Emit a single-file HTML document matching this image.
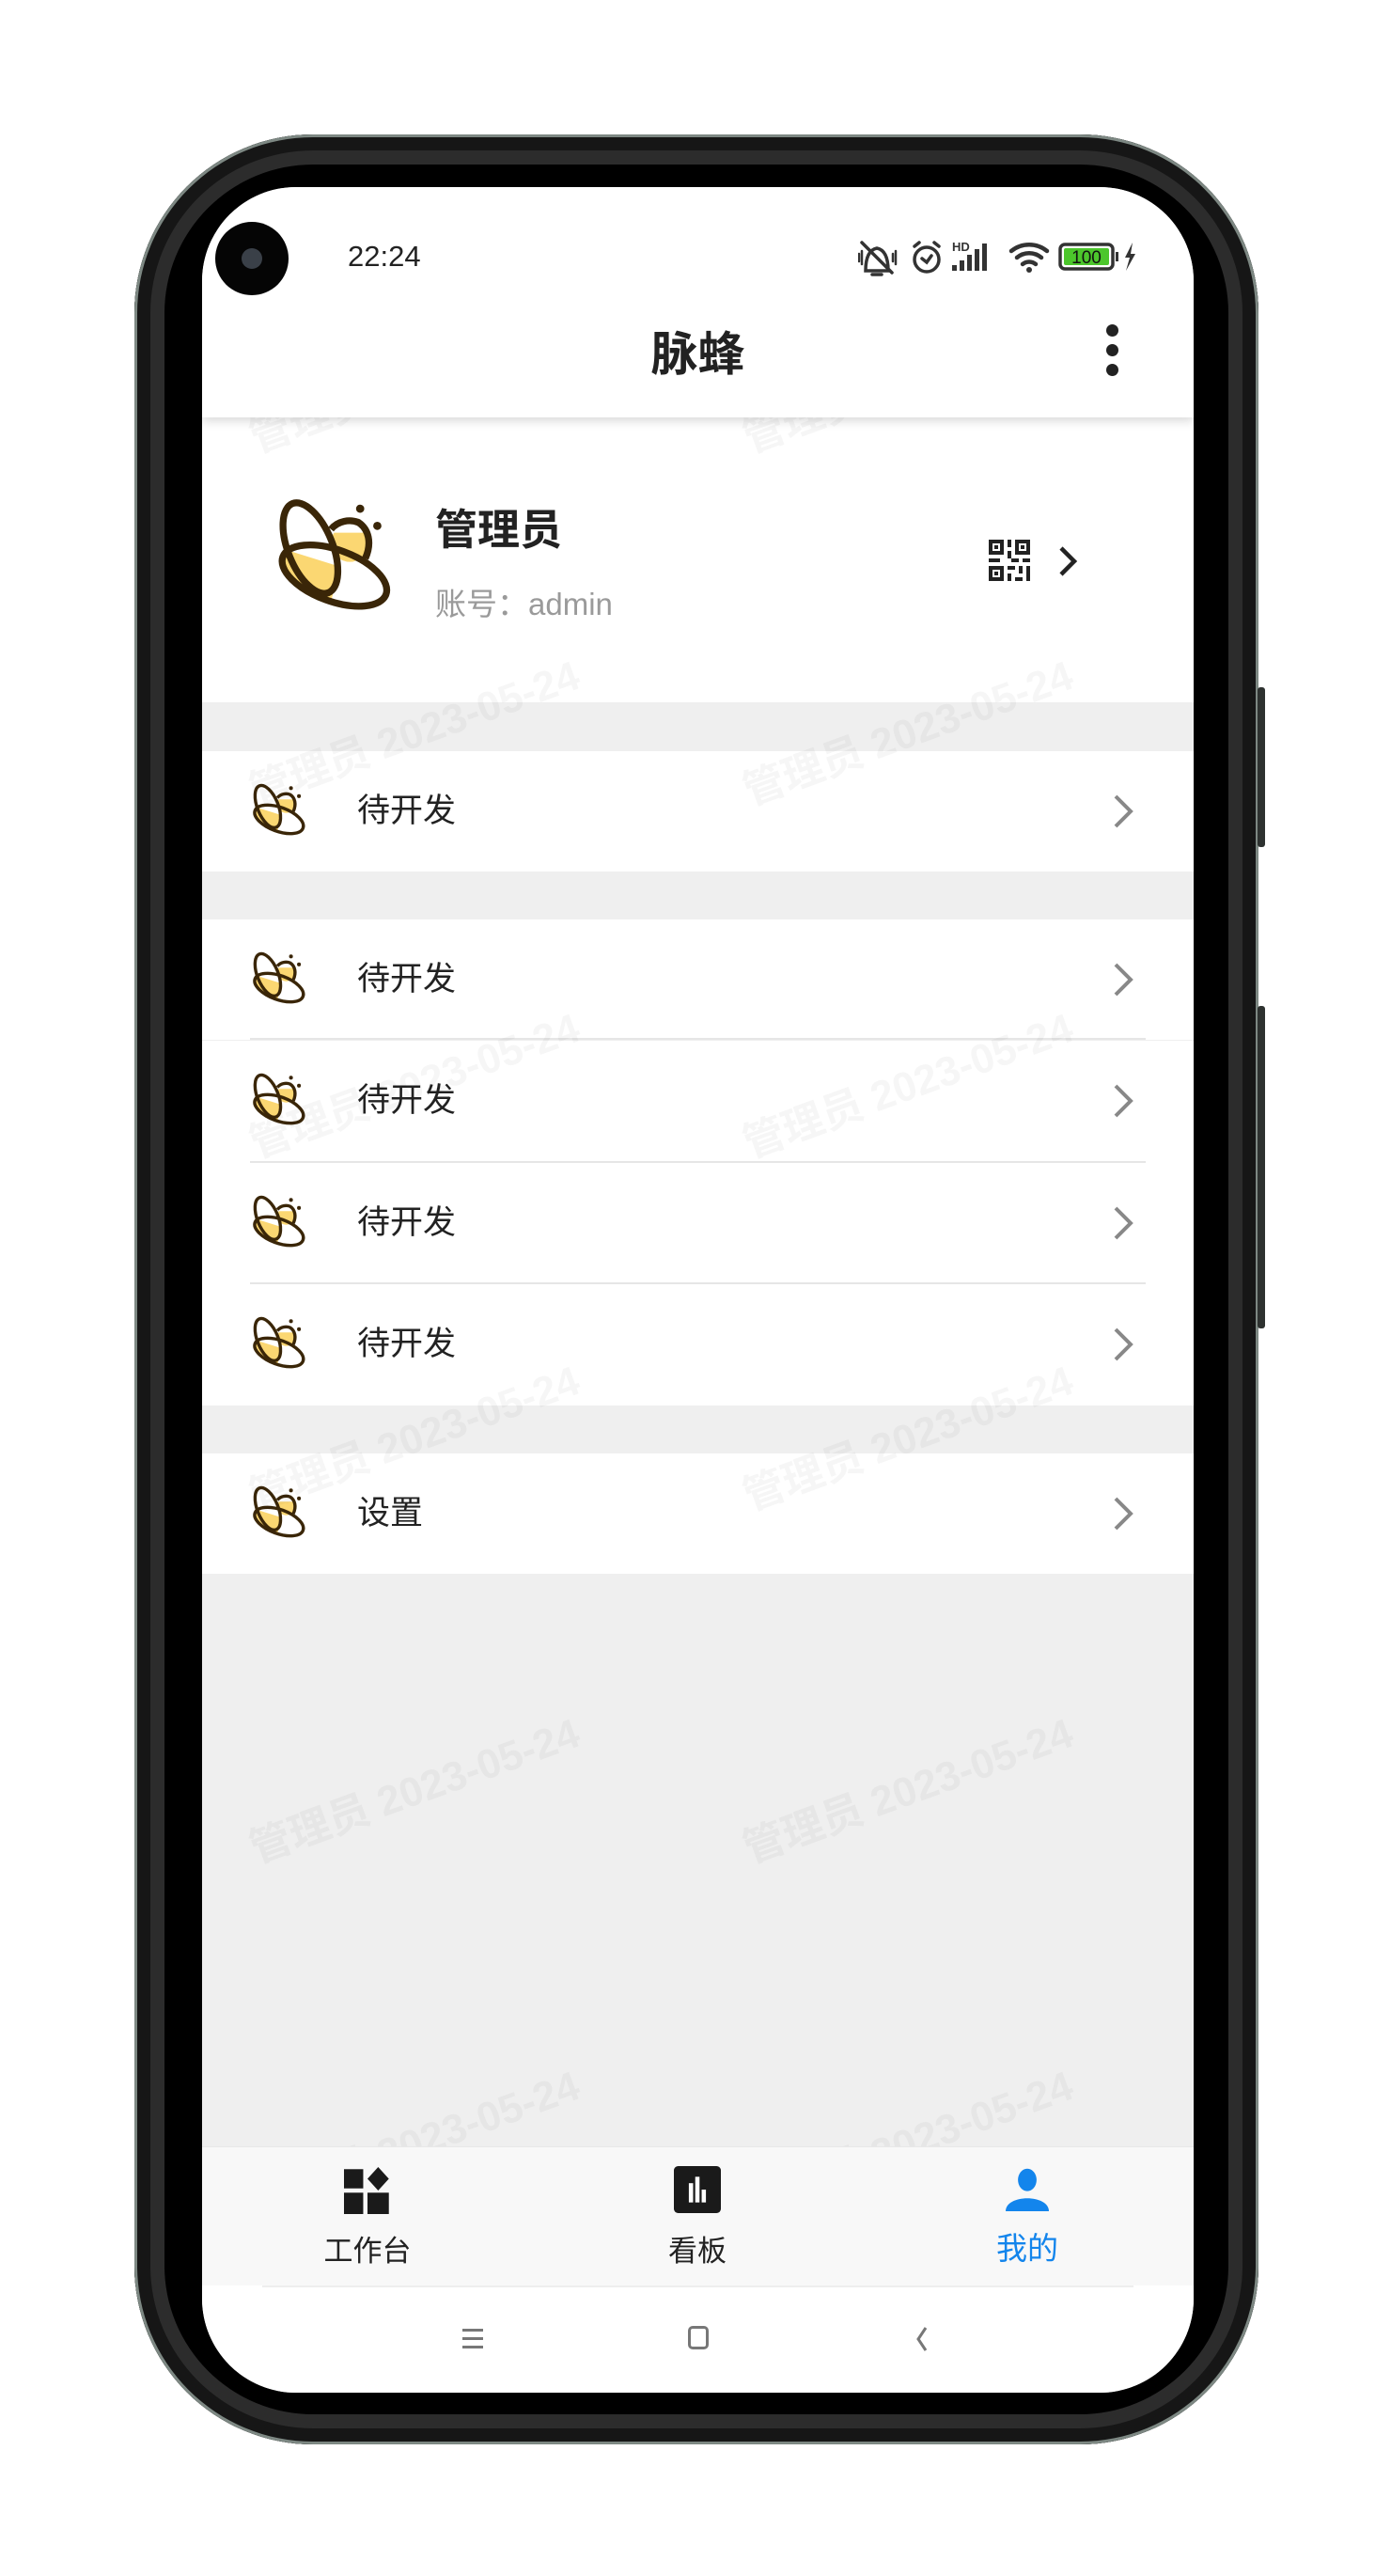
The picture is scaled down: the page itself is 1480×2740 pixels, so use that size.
<!DOCTYPE html>
<html><head><meta charset="utf-8"><style>
*{margin:0;padding:0;box-sizing:border-box}
body{width:1480px;height:2740px;background:#fff;position:relative;overflow:hidden;font-family:"Liberation Sans","Noto Sans CJK SC",sans-serif}
.phone{position:absolute;left:143px;top:143px;width:1196px;height:2457px;border-radius:190px;background:#000;box-shadow:inset 0 0 0 3px #7d8883,inset 0 0 0 17px #161616,inset 0 0 0 32px #2c2c2c}
.btn{position:absolute;left:1338px;width:8px;background:#2e3230;border-radius:3px}
.screen{position:absolute;left:215px;top:199px;width:1055px;height:2346px;border-radius:100px;background:#efefef;overflow:hidden}
.abs{position:absolute}
.row{position:absolute;left:0;width:1055px;height:128px;background:#fff}
.row .ic{position:absolute;left:47px;top:30px;width:68px;height:68px}
.row .t{position:absolute;left:165px;top:42px;font-size:35px;color:#222;line-height:44px}
.row .ch{position:absolute;left:968px;top:44px}
.sep{position:absolute;left:51px;right:51px;bottom:0;height:2px;background:#e6e6e6}
.wm{position:absolute;color:rgba(0,0,0,0.035);font-size:44px;font-weight:bold;transform:rotate(-20deg);white-space:nowrap}
</style></head><body>
<svg width="0" height="0" style="position:absolute">
<defs>
<clipPath id="cb"><path d="M0 46 L42 44 L46 80 L0 80Z"/></clipPath>
<clipPath id="cc"><rect x="30" y="25" width="40" height="30"/></clipPath>
<g id="bee">
<circle cx="50" cy="31" r="11" fill="#fbd772" clip-path="url(#cc)"/>
<ellipse cx="41" cy="50" rx="32" ry="15" transform="rotate(20 41 50)" fill="#fbd772" clip-path="url(#cb)"/>
<path d="M39 23 C43 18 50 17 55 19 C61 23 63 31 59 40" fill="none" stroke="#3a2608" stroke-width="4"/>
<ellipse cx="27" cy="34" rx="13" ry="28" transform="rotate(-22 27 34)" fill="none" stroke="#3a2608" stroke-width="4"/>
<ellipse cx="41" cy="50" rx="32" ry="15" transform="rotate(20 41 50)" fill="none" stroke="#3a2608" stroke-width="4"/>
<circle cx="56" cy="11" r="2.4" fill="#3a2608"/><circle cx="66" cy="21" r="2.4" fill="#3a2608"/>
</g>
<g id="chev"><path d="M4 4 L20 20 L4 36" fill="none" stroke="#888" stroke-width="4"/></g>
</defs></svg>
<div class="phone"></div>
<div class="btn" style="top:731px;height:170px"></div>
<div class="btn" style="top:1070px;height:343px"></div>
<div class="screen">
 <div class="abs" style="left:0;top:0;width:1055px;height:245px;background:#fff;box-shadow:0 4px 10px rgba(0,0,0,0.15);z-index:2"></div>
 <div class="abs" style="left:14px;top:37px;width:78px;height:78px;border-radius:50%;background:#050505;z-index:3"><div style="position:absolute;left:28px;top:28px;width:22px;height:22px;border-radius:50%;background:#3a4048"></div></div>
 <div class="abs" style="left:155px;top:56px;font-size:31px;color:#222;z-index:3">22:24</div>
 <svg class="abs" style="left:698px;top:55px;z-index:3" width="310" height="40" viewBox="0 0 310 40">
  <g fill="none" stroke="#333" stroke-width="3.5" stroke-linecap="round">
   <path d="M8 34 C8 24 10 12 20 10 C30 12 32 24 32 34 Z"/><path d="M15 38 h10"/><path d="M4 4 L36 36" />
   <path d="M1 16 v8 M37 16 v8 M4 13 v14 M40 13 v14" stroke-width="2.5"/>
   <circle cx="73" cy="22" r="13"/><path d="M68 21 l5 4 l5 -7"/><path d="M60 8 l5 -4 M86 8 l-5 -4"/>
  </g>
  <text x="100" y="13" font-size="13" font-weight="bold" fill="#333" font-family="Liberation Sans">HD</text>
  <g fill="#333"><rect x="100" y="28" width="5" height="6"/><rect x="108" y="23" width="5" height="11"/><rect x="116" y="17" width="5" height="17"/><rect x="124" y="11" width="5" height="23"/><rect x="132" y="5" width="5" height="29"/></g>
  <g fill="none" stroke="#333" stroke-width="4.5" stroke-linecap="round"><path d="M163 13 A30 30 0 0 1 201 13"/><path d="M169 20 A20 20 0 0 1 195 20"/><path d="M175 27 A11 11 0 0 1 189 27"/></g>
  <circle cx="182" cy="33" r="3" fill="#333"/>
  <rect x="215" y="6" width="56" height="26" rx="5" fill="none" stroke="#333" stroke-width="3.5"/>
  <rect x="219" y="10" width="48" height="18" rx="2" fill="#4cc62c"/>
  <text x="243" y="26" font-size="19" text-anchor="middle" fill="#111" font-family="Liberation Sans">100</text>
  <rect x="274" y="14" width="3" height="10" fill="#333"/>
  <path d="M292 4 L284 20 L289 20 L285 34 L295 16 L290 16 Z" fill="#333"/>
 </svg>
 <div class="abs" style="left:0;width:1055px;top:138px;text-align:center;font-size:50px;font-weight:bold;color:#222;z-index:3">脉蜂</div>
 <div class="abs" style="left:962px;top:146px;z-index:3"><div style="width:13px;height:13px;border-radius:50%;background:#222;margin-bottom:8px"></div><div style="width:13px;height:13px;border-radius:50%;background:#222;margin-bottom:8px"></div><div style="width:13px;height:13px;border-radius:50%;background:#222"></div></div>
 <div class="abs" style="left:0;top:245px;width:1055px;height:303px;background:#fff"></div>
 <svg class="abs" style="left:66px;top:322px" width="146" height="146" viewBox="0 0 80 80"><use href="#bee"/></svg>
 <div class="abs" style="left:248px;top:328px;font-size:45px;font-weight:bold;color:#222">管理员</div>
 <div class="abs" style="left:248px;top:417px;font-size:33px;color:#9a9a9a">账号：admin</div>
 <svg class="abs" style="left:835px;top:373px" width="48" height="48" viewBox="0 0 24 24"><g fill="#222"><path d="M1 1h8v8H1zM3 3v4h4V3zM15 1h8v8h-8zM17 3v4h4V3zM1 15h8v8H1zM3 17v4h4v-4z"/><rect x="4" y="4" width="2" height="2"/><rect x="18" y="4" width="2" height="2"/><rect x="4" y="18" width="2" height="2"/><rect x="11" y="1" width="2" height="4"/><rect x="11" y="7" width="2" height="4"/><rect x="1" y="11" width="6" height="2"/><rect x="13" y="11" width="4" height="2"/><rect x="19" y="11" width="4" height="2"/><rect x="11" y="15" width="4" height="2"/><rect x="17" y="15" width="2" height="4"/><rect x="21" y="15" width="2" height="8"/><rect x="11" y="19" width="2" height="4"/><rect x="15" y="21" width="4" height="2"/></g></svg>
 <svg class="abs" style="left:910px;top:380px" width="24" height="36"><path d="M4 4 L18 18 L4 32" fill="none" stroke="#222" stroke-width="4.5"/></svg>

 <div class="row" style="top:600px"><svg class="ic" viewBox="0 0 80 80"><use href="#bee"/></svg><div class="t">待开发</div><svg class="ch" width="24" height="40"><use href="#chev"/></svg></div>
 <div class="row" style="top:779px"><svg class="ic" viewBox="0 0 80 80"><use href="#bee"/></svg><div class="t">待开发</div><svg class="ch" width="24" height="40"><use href="#chev"/></svg><div class="sep"></div></div>
 <div class="row" style="top:908px;height:130px"><svg class="ic" viewBox="0 0 80 80"><use href="#bee"/></svg><div class="t">待开发</div><svg class="ch" width="24" height="40"><use href="#chev"/></svg><div class="sep"></div></div>
 <div class="row" style="top:1038px;height:129px"><svg class="ic" viewBox="0 0 80 80"><use href="#bee"/></svg><div class="t">待开发</div><svg class="ch" width="24" height="40"><use href="#chev"/></svg><div class="sep"></div></div>
 <div class="row" style="top:1167px;height:129px"><svg class="ic" viewBox="0 0 80 80"><use href="#bee"/></svg><div class="t">待开发</div><svg class="ch" width="24" height="40"><use href="#chev"/></svg></div>
 <div class="row" style="top:1347px"><svg class="ic" viewBox="0 0 80 80"><use href="#bee"/></svg><div class="t">设置</div><svg class="ch" width="24" height="40"><use href="#chev"/></svg></div>

 <div class="wm" style="left:40px;top:170px">管理员 2023-05-24</div>
 <div class="wm" style="left:565px;top:170px">管理员 2023-05-24</div>
 <div class="wm" style="left:40px;top:545px">管理员 2023-05-24</div>
 <div class="wm" style="left:565px;top:545px">管理员 2023-05-24</div>
 <div class="wm" style="left:40px;top:920px">管理员 2023-05-24</div>
 <div class="wm" style="left:565px;top:920px">管理员 2023-05-24</div>
 <div class="wm" style="left:40px;top:1295px">管理员 2023-05-24</div>
 <div class="wm" style="left:565px;top:1295px">管理员 2023-05-24</div>
 <div class="wm" style="left:40px;top:1670px">管理员 2023-05-24</div>
 <div class="wm" style="left:565px;top:1670px">管理员 2023-05-24</div>
 <div class="wm" style="left:40px;top:2045px">管理员 2023-05-24</div>
 <div class="wm" style="left:565px;top:2045px">管理员 2023-05-24</div>

 <div class="abs" style="left:0;top:2084px;width:1055px;height:148px;background:#f8f8f8;border-top:1px solid #e8e8e8"></div>
 <svg class="abs" style="left:151px;top:2106px" width="50" height="50" viewBox="0 0 22 22"><g fill="#1a1a1a"><rect x="0" y="1" width="9" height="9"/><path d="M16 0 L21 5.5 L16 11 L11 5.5Z"/><rect x="0" y="12" width="9" height="10"/><rect x="11" y="12" width="10" height="10"/></g></svg>
 <div class="abs" style="left:127px;top:2170px;width:98px;text-align:center;font-size:31px;color:#222">工作台</div>
 <svg class="abs" style="left:502px;top:2105px" width="50" height="50" viewBox="0 0 22 22"><rect x="0" y="0" width="22" height="22" rx="2" fill="#1a1a1a"/><g fill="#fff"><rect x="7" y="8" width="2" height="9"/><rect x="10" y="5" width="2" height="12"/><rect x="13" y="11" width="2" height="6"/></g></svg>
 <div class="abs" style="left:477px;top:2170px;width:100px;text-align:center;font-size:31px;color:#222">看板</div>
 <svg class="abs" style="left:855px;top:2107px" width="46" height="46" viewBox="0 0 20 20"><g fill="#1385ec"><ellipse cx="10" cy="5.5" rx="4.3" ry="5.2"/><path d="M0 20 C0 12 20 12 20 20Z"/></g></svg>
 <div class="abs" style="left:828px;top:2166px;width:100px;text-align:center;font-size:33px;color:#1385ec">我的</div>

 <div class="abs" style="left:0;top:2232px;width:1055px;height:114px;background:#fff"></div>
 <div class="abs" style="left:64px;top:2232px;width:927px;height:2px;background:#eee"></div>
 <div class="abs" style="left:277px;top:2278px;width:22px"><div style="height:3px;background:#777;margin-bottom:6px"></div><div style="height:3px;background:#777;margin-bottom:6px"></div><div style="height:3px;background:#777"></div></div>
 <div class="abs" style="left:517px;top:2275px;width:22px;height:25px;border:3px solid #777;border-radius:5px"></div>
 <svg class="abs" style="left:758px;top:2275px" width="16" height="28"><path d="M12 2 L4 14 L12 26" fill="none" stroke="#777" stroke-width="3"/></svg>
</div>
</body></html>
